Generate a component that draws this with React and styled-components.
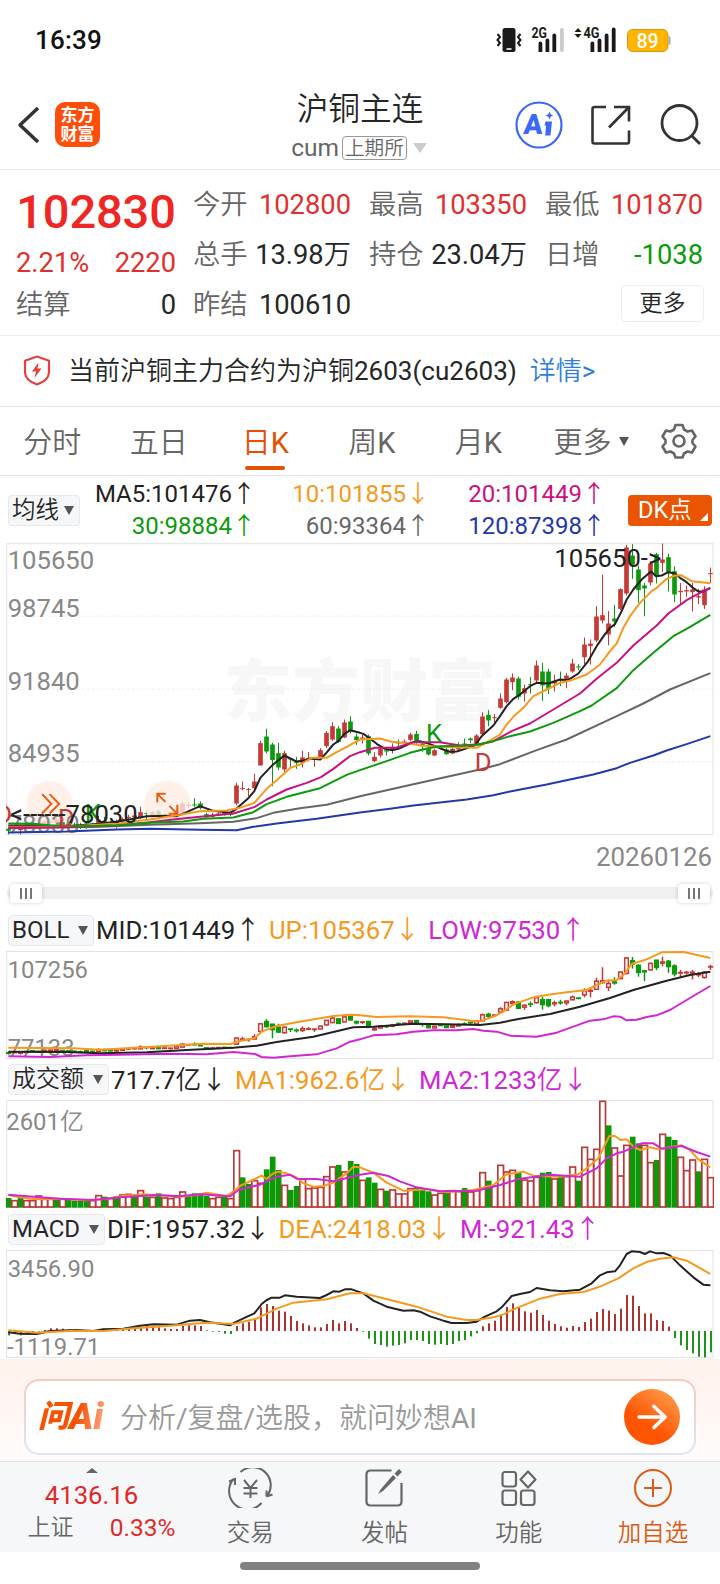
import React from 'react';
import styled, { createGlobalStyle } from 'styled-components';

const RED = '#c53a36';
const GREEN = '#0c9a0c';

/* chart data: three plot units per css pixel, one session every 18 units */
const STEP = 18;
const FIRST = 25.5;
const xAt = (i) => FIRST + i * STEP;

// [rising, body top, body bottom, high, low]
const candles = [
  [0, 868, 874, 864, 885], [1, 862, 868, 858, 872], [1, 866, 872, 860, 885], [1, 858, 866, 854, 870],
  [0, 850, 858, 846, 864], [0, 856, 862, 850, 866], [1, 846, 852, 842, 858], [1, 845, 849, 842, 852],
  [1, 840, 850, 836, 854], [0, 848, 856, 844, 860], [0, 852, 858, 848, 862], [0, 856, 862, 850, 866],
  [0, 860, 865, 850, 868], [0, 852, 862, 846, 868], [0, 856, 862, 850, 866], [1, 840, 856, 830, 862],
  [0, 844, 850, 832, 855], [0, 848, 852, 844, 856], [1, 846, 852, 840, 866], [1, 838, 846, 834, 850],
  [1, 832, 835, 826, 845], [1, 828, 834, 822, 838], [1, 818, 834, 802, 838], [0, 820, 823, 810, 838],
  [1, 818, 832, 814, 834], [0, 814, 831, 810, 838], [1, 826, 830, 822, 834], [1, 828, 830, 822, 840],
  [1, 812, 828, 806, 832], [1, 792, 818, 785, 822], [1, 796, 799, 790, 804], [0, 795, 798, 776, 802],
  [0, 792, 806, 786, 810], [0, 824, 834, 820, 838], [1, 826, 832, 820, 834], [1, 822, 826, 818, 830],
  [0, 820, 824, 816, 828], [0, 822, 826, 816, 830], [1, 738, 792, 730, 798], [1, 746, 749, 726, 752],
  [1, 749, 752, 745, 770], [1, 726, 746, 703, 750], [1, 611, 678, 604, 678], [0, 591, 636, 568, 642],
  [0, 615, 662, 610, 740], [0, 641, 684, 610, 692], [1, 641, 690, 634, 697], [0, 657, 660, 655, 684],
  [0, 668, 671, 652, 688], [1, 654, 670, 634, 684], [1, 656, 660, 638, 665], [1, 658, 661, 652, 682],
  [1, 632, 657, 626, 660], [1, 580, 620, 575, 626], [1, 560, 600, 548, 604], [0, 567, 607, 560, 610],
  [1, 549, 594, 540, 596], [0, 546, 576, 530, 582], [0, 591, 602, 582, 616], [1, 594, 598, 586, 612],
  [0, 590, 642, 585, 648], [1, 652, 665, 638, 668], [1, 628, 648, 622, 654], [0, 632, 636, 626, 648],
  [1, 622, 632, 612, 642], [0, 608, 612, 600, 620], [1, 606, 610, 600, 616], [1, 585, 601, 580, 606],
  [0, 583, 606, 574, 612], [0, 612, 616, 608, 636], [0, 626, 645, 620, 648], [1, 632, 648, 628, 650],
  [0, 622, 626, 618, 630], [0, 630, 644, 626, 646], [1, 628, 642, 624, 644], [1, 618, 630, 608, 632],
  [0, 612, 615, 597, 622], [0, 597, 602, 594, 610], [1, 588, 612, 584, 616], [1, 531, 584, 518, 588],
  [0, 526, 543, 512, 560], [1, 533, 536, 524, 550], [1, 477, 505, 462, 508], [1, 420, 488, 415, 492],
  [1, 414, 428, 402, 452], [0, 417, 472, 412, 480], [1, 446, 462, 435, 486], [0, 434, 437, 412, 462],
  [1, 378, 423, 363, 428], [0, 396, 438, 370, 484], [0, 396, 448, 388, 464], [1, 424, 432, 405, 456],
  [0, 420, 423, 396, 440], [1, 408, 424, 400, 446], [1, 372, 396, 358, 400], [0, 381, 384, 374, 392],
  [1, 315, 353, 294, 375], [1, 312, 320, 300, 375], [1, 231, 303, 200, 308], [1, 227, 243, 106, 252],
  [1, 252, 285, 215, 318], [0, 237, 246, 196, 262], [1, 149, 208, 146, 212], [1, 24, 162, 16, 168],
  [0, 48, 76, 14, 118], [0, 90, 152, 78, 190], [0, 138, 147, 130, 230], [1, 72, 129, 66, 138],
  [0, 44, 108, 40, 132], [1, 60, 70, 12, 98], [0, 53, 100, 42, 156], [0, 95, 165, 80, 188],
  [1, 154, 158, 130, 196], [1, 152, 156, 138, 172], [1, 150, 158, 130, 216], [1, 170, 174, 148, 194],
  [1, 150, 197, 140, 208], [1, 101, 104, 84, 130],
];

const averages = [
  ['#2438a8', '25,879 200,876 350,870 450,868 600,871 710,872 760,862 830,852 950,838 1080,819 1170,808 1240,798 1400,780 1480,767 1530,756 1640,735 1780,705 1850,686 1890,670 1960,648 2000,633 2060,614 2131,590'],
  ['#666666', '25,866 300,862 450,856 600,851 700,847 770,836 820,820 900,806 980,796 1080,770 1240,734 1440,690 1500,674 1610,632 1700,600 1850,530 1930,492 2010,450 2131,401'],
  ['#222222', '25,858 100,858 200,860 300,853 360,845 400,838 440,830 500,829 530,830 555,820 600,800 640,814 691,820 709,808 745,776 763,755 781,715 817,677 853,648 889,666 907,664 930,657 961,660 979,640 1000,615 1015,605 1033,583 1051,572 1080,580 1090,583 1110,597 1130,613 1155,628 1177,632 1200,626 1240,608 1260,605 1290,614 1330,630 1350,637 1370,636 1395,628 1425,617 1445,590 1480,558 1500,530 1520,500 1540,478 1560,465 1590,440 1610,430 1645,432 1680,420 1703,422 1718,413 1735,402 1765,364 1790,320 1815,284 1830,265 1845,254 1865,215 1880,180 1900,150 1925,120 1953,96 1968,110 1985,108 2005,98 2025,102 2040,115 2060,128 2080,146 2095,156 2110,156 2131,145'],
  ['#f7991c', '25,862 200,862 350,852 450,840 540,826 600,815 680,813 720,805 763,790 800,748 835,718 870,686 900,675 935,655 980,655 1010,638 1040,622 1080,600 1140,597 1175,607 1230,612 1260,618 1320,622 1430,625 1470,603 1500,585 1520,555 1540,532 1570,505 1600,470 1640,450 1680,430 1715,422 1760,405 1800,375 1830,335 1850,312 1870,265 1890,230 1920,190 1955,155 1970,145 2000,118 2025,108 2043,107 2075,125 2131,131'],
  ['#c8127f', '25,864 200,863 350,858 450,848 520,840 600,832 700,822 763,803 800,780 860,750 920,730 963,713 1000,688 1050,650 1080,638 1125,625 1190,624 1240,608 1320,608 1380,618 1440,614 1480,605 1535,575 1590,552 1660,510 1740,462 1790,418 1850,370 1900,318 1970,258 2005,222 2060,182 2100,160 2131,146'],
  ['#0c9a0c', '25,852 100,853 150,857 250,860 350,857 450,850 550,846 610,838 700,834 760,818 800,794 860,772 960,746 1040,706 1080,692 1160,665 1230,640 1280,627 1320,620 1420,618 1480,605 1530,590 1590,576 1660,550 1740,515 1775,498 1850,446 1900,392 1960,340 2020,290 2060,268 2131,226'],
];

const bollLines = [
  ['#f7991c', '25,413 220,415 300,419 430,412 560,404 610,401 695,402 709,395 763,385 785,365 830,348 890,337 1000,318 1050,314 1080,316 1130,321 1230,319 1330,322 1420,333 1445,332 1480,320 1510,305 1540,283 1600,262 1640,255 1700,247 1760,240 1790,225 1820,212 1850,210 1870,195 1895,162 1940,148 1985,127 2050,126 2075,131 2131,144'],
  ['#222222', '25,425 200,426 300,430 440,427 560,420 700,413 770,407 830,396 940,380 1060,352 1120,350 1240,341 1340,343 1440,345 1500,338 1560,326 1650,312 1740,290 1830,264 1900,240 2000,212 2070,195 2131,185'],
  ['#cf28d3', '25,439 150,441 260,436 360,434 500,431 620,433 700,426 765,432 785,441 820,443 880,438 950,433 1010,415 1050,395 1080,388 1120,376 1190,373 1240,365 1300,361 1370,361 1420,357 1450,362 1490,365 1530,377 1610,380 1670,368 1770,332 1810,328 1840,319 1860,320 1880,331 1910,329 1940,321 1970,316 2010,300 2080,258 2131,228'],
];

// bar tops, negative for a falling session
const volumes = [
  -354, 362, -354, 362, 362, 348, 358, 358, -356, 358, -360, -362, -362, -362, 362, 347, -350, 356, -348, 345,
  343, -350, 332, -350, 352, -340, 354, 356, 352, 336, -347, -340, -344, -348, 356, 352, -350, 356, 212, -292,
  -312, 302, 310, -268, -230, -270, 316, -330, -318, 298, 326, 324, 322, 290, 261, -255, 276, -243, -252, 301,
  -292, -308, 328, -332, 330, 342, 342, 326, -322, -326, -334, 345, 340, -330, 332, 335, -324, 336, 332, 278,
  -302, 318, 256, 276, 271, -276, 300, 303, 292, -278, -276, 297, -290, 290, 261, -302, 202, 238, 208, 64,
  -136, 204, 288, 196, -170, -190, 196, 248, -240, 163, -170, -180, 232, 272, 240, -274, 238, 293,
];

const volumeLines = [
  ['#f7991c', '25,345 60,352 100,357 180,356 260,361 320,356 370,347 430,343 480,346 540,350 590,345 620,338 680,348 700,335 720,318 785,287 799,297 820,280 835,275 860,280 890,293 910,310 940,320 970,318 1000,308 1040,280 1060,260 1080,262 1120,278 1160,308 1210,332 1280,328 1340,337 1420,330 1480,315 1520,283 1570,275 1600,287 1680,290 1735,283 1760,265 1795,235 1828,168 1845,168 1862,180 1880,178 1900,200 1920,210 1950,202 1975,208 2045,196 2070,210 2095,238 2131,262'],
  ['#cf28d3', '25,344 100,350 180,356 280,360 360,352 470,345 540,349 600,343 690,349 715,330 780,314 830,290 870,284 890,296 950,297 1000,304 1050,292 1080,284 1120,278 1165,288 1200,304 1250,322 1320,334 1430,332 1500,315 1560,296 1650,284 1740,290 1790,265 1820,235 1850,220 1870,215 1905,200 1925,190 1960,190 1985,206 2045,198 2090,216 2131,230'],
];

const MACD_ZERO = 753;
const macdBars = [
  766, 762, 766, 762, 758, 755, 750, 745, 745, 746, 748, 748, 750, 751, 751, 750, 748, 746, 746, 746,
  744, 742, 740, 738, 740, 742, 745, 747, 747, 738, 736, 736, 738, 751, 755, 756, 761, 762, 738, 730,
  725, 715, 682, 672, 678, 692, 695, 708, 723, 730, 736, 742, 742, 732, 720, 730, 723, 730, 744, 755,
  776, 792, 795, 800, 797, 795, 790, 780, 780, 783, 792, 794, 792, 795, 792, 783, 780, 769, 760, 739,
  730, 722, 705, 681, 670, 684, 694, 698, 690, 705, 722, 732, 739, 743, 738, 741, 726, 716, 696, 687,
  692, 702, 686, 645, 647, 678, 700, 700, 720, 723, 740, 774, 796, 810, 820, 830, 832, 817,
];

const macdLines = [
  ['#222222', '25,757 60,761 110,762 150,753 230,750 280,753 310,748 370,746 420,737 460,733 530,734 570,722 600,720 630,727 690,736 705,727 735,713 763,700 785,672 800,660 815,653 840,653 855,646 890,650 960,654 980,645 1000,634 1018,635 1035,628 1055,628 1090,640 1120,662 1160,680 1210,692 1240,691 1260,695 1290,709 1330,722 1355,729 1400,729 1430,725 1455,710 1490,694 1505,682 1535,648 1560,642 1590,636 1610,624 1650,631 1690,634 1740,629 1775,610 1800,586 1820,577 1845,574 1860,556 1880,522 1895,514 1920,516 1935,522 1950,514 1970,520 1990,519 2010,526 2040,556 2080,592 2110,614 2131,616'],
  ['#f7991c', '25,751 110,758 220,752 310,753 400,745 500,738 620,728 700,732 770,716 830,686 880,668 980,658 1050,640 1090,640 1150,655 1250,680 1340,710 1400,720 1430,720 1480,712 1510,703 1540,688 1620,656 1680,642 1750,636 1800,620 1855,595 1900,565 1940,546 1980,536 2020,532 2060,542 2131,582'],
];

const FONTS = "Roboto, 'Noto Sans CJK SC DemiLight', 'Noto Sans CJK SC', sans-serif";
const BOLD_FONTS = "Roboto, 'Noto Sans CJK SC', sans-serif";

const GlobalStyle = createGlobalStyle`
  * {
    box-sizing: border-box;
  }
  body {
    margin: 0;
    background: #fff;
    color: #262626;
    font-family: ${FONTS};
    line-height: 1.2;
  }
`;

const Screen = styled.div`
  display: flex;
  flex-direction: column;
  width: 720px;
  height: 1584px;
  overflow: hidden;
  white-space: nowrap;
`;

const StatusBar = styled.div`
  display: flex;
  justify-content: space-between;
  align-items: center;
  height: 80px;
  padding: 0 48px 0 35px;
`;

const Clock = styled.span`
  padding-top: 2px;
  font-size: 26px;
  font-weight: 500;
  letter-spacing: 0.2px;
  color: #111;
`;

const Header = styled.header`
  display: grid;
  grid-template-columns: 240px 1fr 240px;
  height: 90px;
  border-bottom: 1.5px solid #e8e8e8;
`;

const HeaderSide = styled.div`
  display: flex;
  align-items: center;
  gap: ${(props) => props.$gap}px;
  padding-left: ${(props) => props.$left}px;
`;

const Logo = styled.div`
  width: 45px;
  height: 45px;
  padding-top: 4px;
  border-radius: 10px;
  background: #ff4d0a;
  color: #fff;
  font-family: ${BOLD_FONTS};
  font-size: 17px;
  font-weight: 700;
  line-height: 18.5px;
  text-align: center;
`;

const TitleBlock = styled.div`
  display: flex;
  flex-direction: column;
  align-items: center;
`;

const Title = styled.div`
  margin-top: 7px;
  font-size: 31.7px;
  line-height: 46px;
`;

const Subtitle = styled.div`
  display: flex;
  align-items: center;
  gap: 3px;
  margin-top: -3px;
  padding-right: 2px;
  height: 36px;
  font-size: 24.5px;
  color: #666;
`;

const Exchange = styled.span`
  height: 24px;
  margin-right: 3px;
  padding: 0 2px;
  border: 1px solid #999;
  border-radius: 4px;
  font-size: 19.6px;
  line-height: 23px;
`;

const Triangle = styled.i`
  border: solid transparent;
  border-width: ${(props) => props.$h}px ${(props) => props.$w / 2}px 0;
  border-top-color: ${(props) => props.$color || '#555'};
`;

const Quote = styled.section`
  display: grid;
  grid-template-columns: 160px 1fr;
  column-gap: 17px;
  height: 166px;
  padding: 10px 16px 0;
  border-bottom: 1px solid #ededed;
  font-size: 27.3px;
`;

const PriceColumn = styled.div`
  color: #e0302d;
`;

const Price = styled.div`
  height: 65px;
  font-size: 47px;
  font-weight: 500;
  line-height: 64px;
  letter-spacing: -0.1px;
  color: #ee2624;
  text-align: center;
`;

const Pair = styled.div`
  display: flex;
  justify-content: space-between;
  align-items: center;
  height: ${(props) => props.$h || 50}px;
  padding-top: ${(props) => props.$top || 0}px;
  color: ${(props) => props.$color || '#262626'};
`;

const Label = styled.span`
  color: #666;
`;

const Stats = styled.div`
  display: grid;
  grid-template-columns: repeat(3, 158px);
  grid-auto-rows: 50px;
  column-gap: 18px;
`;

const MoreButton = styled.button`
  grid-column: 3;
  justify-self: end;
  align-self: center;
  width: 83px;
  height: 37px;
  margin: 0 -1px 3px 0;
  padding: 0;
  border: 1.5px solid #ececec;
  border-radius: 5px;
  background: #fff;
  color: #262626;
  font: inherit;
  font-size: 23px;
`;

const Notice = styled.div`
  display: flex;
  align-items: center;
  height: 71px;
  padding: 2px 0 0 23px;
  border-bottom: 1.5px solid #e6e6e6;
  font-size: 26px;

  svg {
    margin: -3px 17px 0 0;
  }
`;

const NoticeLink = styled.a`
  margin-left: 13px;
  color: #2f7fd8;
`;

const Tabs = styled.nav`
  display: grid;
  grid-template-columns: repeat(5, 106.5px) 119px 1fr;
  height: 69px;
  padding-right: 12px;
  border-bottom: 1.5px solid #e6e6e6;
`;

const Tab = styled.div`
  display: flex;
  justify-content: center;
  align-items: center;
  gap: 7px;
  position: relative;
  padding: 4px 2px 0 0;
  font-size: 29px;
  color: ${(props) => (props.$active ? '#e25104' : '#666')};

  svg,
  i {
    margin-top: -4px;
  }

  &::after {
    content: '';
    display: ${(props) => (props.$active ? 'block' : 'none')};
    position: absolute;
    bottom: 5px;
    width: 40px;
    height: 4px;
    border-radius: 2px;
    background: #e25104;
  }
`;

const Legend = styled.div`
  display: flex;
  align-items: center;
  height: 67px;
  padding: 1px 8px 0;
`;

const Picker = styled.div`
  display: flex;
  justify-content: space-between;
  align-items: center;
  width: ${(props) => props.$w}px;
  height: 31px;
  padding: 0 5px 0 3px;
  border: 1px solid #e6e8ec;
  border-radius: 4px;
  background: #f6f7f9;
  font-size: ${(props) => props.$size || 24}px;
`;

const LegendGrid = styled.div`
  display: grid;
  grid-template-columns: 176px 174px 176px;
  grid-auto-rows: 32px;
  align-items: center;
  justify-items: end;
  width: 526px;
  padding-top: 1px;
  font-size: 24px;
`;

const Series = styled.span`
  color: ${(props) => props.$color};
`;

const DkButton = styled.div`
  display: flex;
  align-items: center;
  position: relative;
  width: 84px;
  height: 31px;
  margin-left: auto;
  padding-left: 10px;
  border-radius: 4px;
  background: #ea5504;
  color: #fff;
  font-size: 23.5px;

  &::after {
    content: '';
    position: absolute;
    right: 4px;
    bottom: 5px;
    border: solid transparent;
    border-width: 0 0 8px 8px;
    border-bottom-color: #fff;
  }
`;

const Plot = styled.svg`
  display: block;
  flex: none;
  width: 708px;
  height: ${(props) => props.$h}px;
  margin-left: 6px;
  overflow: hidden;

  text {
    font-family: ${FONTS};
  }
`;

const Watermark = styled.text`
  && {
    font-family: ${BOLD_FONTS};
  }
  font-size: 204px;
  font-weight: 900;
  text-anchor: middle;
  fill: #f7f7f7;
`;

const Dates = styled.div`
  display: flex;
  justify-content: space-between;
  align-items: center;
  height: 44px;
  padding: 0 8px;
  font-size: 25.8px;
  color: #888;
`;

const Range = styled.div`
  display: flex;
  justify-content: space-between;
  align-items: center;
  height: 12px;
  margin: 8px 7px 0;
  padding: 0 3px;
  border-radius: 6px;
  background: #f0f0f2;
`;

const Handle = styled.div`
  display: flex;
  justify-content: center;
  align-items: center;
  gap: 3.5px;
  width: 32px;
  height: 19px;
  border-radius: 4px;
  background: #fff;
  box-shadow: 0 0 4px rgba(0, 0, 0, 0.2);

  i {
    width: 1.5px;
    height: 11px;
    background: #777;
  }
`;

const PanelHead = styled.div`
  display: flex;
  align-items: center;
  gap: 2px;
  height: ${(props) => props.$h}px;
  padding: ${(props) => props.$top || 0}px 8px 0;
  font-size: 25.7px;

  span + span {
    margin-left: 1.7px;
  }
`;

const Values = styled.div`
  padding-top: 1px;
`;

const AskArea = styled.div`
  height: 102px;
  margin-top: 1px;
  padding: 20px 24px 0;
  background: linear-gradient(#fff1ec, #fffcfb);
`;

const AskBox = styled.div`
  display: flex;
  align-items: center;
  height: 76px;
  padding: 0 14px 0 10px;
  border: 2px solid transparent;
  border-radius: 15px;
  background: linear-gradient(#fff, #fff) padding-box, linear-gradient(#f6c8bf, #dfe5f2) border-box;
`;

const AskLogo = styled.div`
  display: flex;
  align-items: center;
  width: 84px;
  height: 44px;
  padding-left: 2px;
  background: linear-gradient(100deg, #f75200 50%, #ffa07a 78%);
  background-clip: text;
  color: transparent;
  font-family: ${BOLD_FONTS};
  font-size: 31px;
  font-weight: 900;
  font-style: italic;
  line-height: 44px;

  b {
    font-size: 37px;
    font-weight: 900;
  }
`;

const Placeholder = styled.div`
  flex: 1;
  padding-top: 4px;
  font-size: 28px;
  color: #999;
`;

const SendButton = styled.div`
  width: 56px;
  height: 56px;
  border-radius: 50%;
  background: linear-gradient(215deg, #ff9a4a 10%, #ff5500 62%);
`;

const BottomBar = styled.nav`
  display: grid;
  grid-template-columns: 183px repeat(4, 134.3px);
  height: 91px;
  border-top: 1px solid #e2e2e4;
  background: #f6f7f9;
`;

const IndexCard = styled.div`
  display: flex;
  flex-direction: column;
  align-items: center;
  padding-top: 6px;
  color: #e02a2a;
  font-size: 25.7px;
`;

const UpMark = styled.i`
  border: solid transparent;
  border-width: 0 6px 5px;
  border-bottom-color: #666;
`;

const IndexValue = styled.div`
  height: 33px;
  line-height: 45px;
`;

const IndexRow = styled.div`
  display: flex;
  justify-content: space-between;
  align-items: center;
  width: 148px;
  height: 34px;
  margin: 5px 0 0 20px;
  font-size: 24.5px;

  ${Label} {
    font-size: 23px;
  }
`;

const NavItem = styled.div`
  display: flex;
  flex-direction: column;
  align-items: center;
  gap: 8px;
  padding-top: 6px;
  color: ${(props) => props.$color || '#666'};
  font-size: 23.5px;
  line-height: 35px;
`;

const HomeIndicator = styled.div`
  width: 240px;
  height: 8px;
  margin: 10px auto 0;
  border-radius: 4px;
  background: #808080;
`;

const Lines = ({ items }) =>
  items.map(([color, points]) => (
    <polyline key={color} points={points} fill="none" stroke={color} strokeWidth="6" strokeLinejoin="round" />
  ));

const Frame = ({ top, bottom }) => (
  <rect x="20" y={top + 1.5} width="2119" height={bottom - top - 3} fill="none" stroke="#e2e2e4" strokeWidth="3" />
);

const KLineChart = () => (
  <Plot $h={292} viewBox="18 10.5 2124 876">
    <Watermark x="1080" y="529">
      东方财富
    </Watermark>
    <Frame top={11} bottom={886} />
    {[230, 449, 667].map((y) => (
      <line key={y} x1="20" x2="2139" y1={y} y2={y} stroke="#ececec" strokeWidth="2.5" strokeDasharray="10 5" />
    ))}
    {candles.map(([up, top, bottom, high, low], i) => (
      <g key={i} fill={up ? RED : GREEN}>
        <rect x={xAt(i) - 1.5} y={high} width="3" height={low - high} />
        <rect x={xAt(i) - 7} y={top} width="14" height={bottom - top} />
      </g>
    ))}
    <circle cx="148" cy="793" r="69" fill="#ffece3" fillOpacity="0.8" />
    <circle cx="502" cy="793" r="69" fill="#ffece3" fillOpacity="0.8" />
    <g fontSize="77" fill="#888">
      <text x="23" y="87">105650</text>
      <text x="23" y="231">98745</text>
      <text x="23" y="450">91840</text>
      <text x="23" y="668">84935</text>
      <text x="23" y="880">78030</text>
    </g>
    <Lines items={averages} />
    <g fontSize="77">
      <text x="-14" y="850" fill={RED}>D</text>
      <text x="174" y="862" fill={RED}>D</text>
      <text x="254" y="848" fill={GREEN}>K</text>
      <text x="1278" y="606" fill={GREEN}>K</text>
      <text x="1424" y="695" fill={RED}>D</text>
      <text x="30" y="850" fill="#222">&lt;------78030</text>
      <text x="1663" y="83" fill="#222">105650-&gt;</text>
    </g>
    <g fill="none" stroke="#ea5a10" strokeWidth="6">
      <path d="M126 764l28 29-28 29M149 764l28 29-28 29" />
      <path d="M472 788v-25h25M472 763l24 24M532 796v27h-26M532 823l-24-24" />
    </g>
  </Plot>
);

// same sessions squeezed into the 77133 - 107256 range
const toBoll = (y) => 140 + (y - 12) * 0.3365;

const BollChart = () => (
  <Plot $h={108} viewBox="18 123 2124 324">
    <Frame top={123} bottom={447} />
    <g fontSize="71.5" fill="#888">
      <text x="23" y="204">107256</text>
      <text x="23" y="439">77133</text>
    </g>
    {candles.map(([up, top, bottom, high, low], i) => (
      <g key={i} fill={up ? '#fff' : GREEN} stroke={up ? RED : GREEN} strokeWidth="4.500">
        <line x1={xAt(i)} x2={xAt(i)} y1={toBoll(high)} y2={toBoll(low)} />
        <rect x={xAt(i) - 5.5} y={toBoll(top)} width="11" height={toBoll(bottom) - toBoll(top)} />
      </g>
    ))}
    <Lines items={bollLines} />
  </Plot>
);

const VolumeChart = () => (
  <Plot $h={108} viewBox="18 60 2124 324">
    <Frame top={60} bottom={384} />
    <text x="19" y="150" fontSize="71.5" fill="#888">
      2601亿
    </text>
    {volumes.map((value, i) =>
      value > 0 ? (
        <rect key={i} x={xAt(i) - 8} y={value} width="17" height={381 - value} fill="#fff" stroke="#b83a38" strokeWidth="5" />
      ) : (
        <rect key={i} x={xAt(i) - 8} y={-value} width="17" height={383 + value} fill="#0b9a05" />
      ),
    )}
    <Lines items={volumeLines} />
  </Plot>
);

const MacdChart = () => (
  <Plot $h={108} viewBox="18 510 2124 324">
    <Frame top={510} bottom={834} />
    <g fontSize="71.5" fill="#888">
      <text x="23" y="590">3456.90</text>
      <text x="21" y="825">-1119.71</text>
    </g>
    {macdBars.map((y, i) => (
      <rect
        key={i}
        x={xAt(i) - 1.5}
        y={Math.min(y, MACD_ZERO)}
        width="6"
        height={Math.abs(y - MACD_ZERO)}
        fill={y < MACD_ZERO ? '#ad3330' : '#1c9418'}
      />
    ))}
    <Lines items={macdLines} />
  </Plot>
);

const StatusIcons = () => (
  <svg width="178" height="32" viewBox="494 24 178 32">
    <g fill="#1a1a1a">
      <rect x="502.500" y="28" width="13" height="24" rx="2.500" />
      <path d="M538.500 43.500a1.900 1.900 0 0 1 3.800 0V52h-3.800zM545.500 40.500a1.900 1.900 0 0 1 3.800 0V52h-3.800zM552.400 35.500a1.900 1.900 0 0 1 3.800 0V52h-3.800z" />
      <path d="M590.500 43.500a1.900 1.900 0 0 1 3.800 0V52h-3.800zM597.600 40.500a1.900 1.900 0 0 1 3.800 0V52h-3.800zM604.700 35.500a1.900 1.900 0 0 1 3.800 0V52h-3.800zM611.800 29.500a1.900 1.900 0 0 1 3.800 0V52h-3.800z" />
      <path d="M574.500 32l3.500-4 3.500 4zM574.500 34l3.500 4 3.500-4z" />
    </g>
    <rect x="560" y="28" width="3.800" height="24" rx="1.500" fill="#ccc" />
    <path d="M506.500 49h5" stroke="#fff" strokeWidth="1.600" />
    <path d="M497.500 34l2.500 3-2.500 3 2.500 3-2.500 3M520.500 34l-2.500 3 2.500 3-2.500 3 2.500 3" fill="none" stroke="#1a1a1a" strokeWidth="2" />
    <g fontFamily="Roboto" fontWeight="700" fill="#1a1a1a" fontSize="14.500">
      <text x="531.500" y="38" textLength="15.500" lengthAdjust="spacingAndGlyphs">2G</text>
      <text x="583.500" y="38" textLength="16" lengthAdjust="spacingAndGlyphs">4G</text>
    </g>
    <rect x="627.500" y="29.500" width="40.500" height="22" rx="5" fill="#ffb400" stroke="#d19c1c" strokeWidth="1" />
    <path d="M669.500 36.500v8" stroke="#aaa" strokeWidth="2" />
    <text x="647.500" y="47.500" textAnchor="middle" fontFamily="Roboto" fontWeight="500" fontSize="19.500" fill="#fff">
      89
    </text>
  </svg>
);

const BackIcon = () => (
  <svg width="24" height="38" viewBox="0 0 24 38" fill="none" stroke="#333" strokeWidth="3.500">
    <path d="M22 2L4 19l18 17" strokeLinejoin="round" />
  </svg>
);

const AiIcon = () => (
  <svg width="48" height="50" viewBox="0 0 48 50">
    <circle cx="24" cy="25" r="22.500" fill="none" stroke="#3b69f5" strokeWidth="2.200" />
    <text x="8.500" y="34.500" fontFamily="Roboto" fontSize="28" fontWeight="900" fill="#3b69f5" transform="skewX(-4) translate(2 0)">
      A
    </text>
    <path d="M30.500 21.500h6.500L35.500 35.500h-5.500l.5-3 .5-7h-1.500zM34.500 11.500q.8 3.500 4 4-3.200.5-4 4-.8-3.500-4-4 3.200-.5 4-4z" fill="#3b69f5" />
  </svg>
);

const ShareIcon = () => (
  <svg width="42" height="42" viewBox="0 0 42 42" fill="none" stroke="#333" strokeWidth="2.600">
    <path d="M16 3H4.500Q2.500 3 2.500 5v32.500q0 2 2 2h32.500q2 0 2-2V26.500M24 3h15v14.500M38.500 3.500L19 23.500" />
  </svg>
);

const SearchIcon = () => (
  <svg width="42" height="42" viewBox="0 0 42 42" fill="none" stroke="#333" strokeWidth="2.800">
    <circle cx="20.500" cy="19" r="17.500" />
    <path d="M32.500 31.500l8.500 8.500" />
  </svg>
);

const ShieldIcon = () => (
  <svg width="28" height="31" viewBox="0 0 28 31">
    <path d="M14 1.500l12 4.300v11.500C26 23 21 27 14 29.500 7 27 2 23 2 17.300V5.800z" fill="none" stroke="#e0423f" strokeWidth="2.200" strokeLinejoin="round" />
    <path d="M15.500 7.500l-6.500 9h4l-1.500 6.500 7-9.500h-4z" fill="#e0423f" />
  </svg>
);

const GearIcon = () => (
  <svg width="36" height="36" viewBox="0 0 36 36" fill="none" stroke="#666" strokeWidth="2.600" strokeLinejoin="round">
    <path d="M14.500 2h7l1.500 4.500 3.500 2 4.500-1 3.500 6-3 3.500v3l3 3.500-3.500 6-4.500-1-3.500 2-1.500 4h-7L13 30.500l-3.500-2-4.500 1-3.500-6 3-3.500v-3l-3-3.500 3.500-6 4.500 1 3.500-2z" />
    <circle cx="18" cy="18" r="5.500" />
  </svg>
);

const TradeIcon = () => (
  <svg width="46" height="40" viewBox="-1 0 46 40" fill="none" stroke="#666" strokeWidth="2">
    <path d="M12.500 4A18 18 0 0 1 39.500 27.500M38.500 28.500v-6M38.500 28.500l6-2M33.500 35A18 18 0 0 1 5.500 11M1 13.500l6-2.500v6M16 12l6.500 8 6.500-8M22.500 19v11M15.500 20h14M15.500 25.500h14" />
  </svg>
);

const PostIcon = () => (
  <svg width="40" height="40" viewBox="0 0 40 40" fill="none" stroke="#666" strokeWidth="2.200">
    <path d="M27.500 2.500H6.500q-4 0-4 4V33.500q0 4 4 4h27q4 0 4-4V15" />
    <path d="M14 26l3-5L29 7l3 3-13 13z" fill="#666" stroke="none" />
    <path d="M32 7l4.500-4.500" strokeWidth="4" />
  </svg>
);

const FeatureIcon = () => (
  <svg width="38" height="40" viewBox="0 0 38 40" fill="none" stroke="#666" strokeWidth="2.200">
    <rect x="2.500" y="4" width="13.500" height="14.500" rx="2.500" />
    <rect x="2.500" y="22.500" width="13.500" height="14.500" rx="2.500" />
    <rect x="21" y="22.500" width="13.500" height="14.500" rx="2.500" />
    <path d="M28 3.500l7.500 8-7.500 8-7.500-8z" strokeLinejoin="round" />
  </svg>
);

const AddIcon = () => (
  <svg width="40" height="40" viewBox="0 0 40 40" fill="none" stroke="#dc5a14" strokeWidth="2">
    <circle cx="20" cy="20" r="18" />
    <path d="M20 11v18M11 20h18" />
  </svg>
);

const Arrow = () => <Triangle $w={10} $h={9} />;

const stats = [
  ['今开', '102800', '#e0302d'],
  ['最高', '103350', '#e0302d'],
  ['最低', '101870', '#e0302d'],
  ['总手', '13.98万'],
  ['持仓', '23.04万'],
  ['日增', '-1038', '#0c9a0c'],
  ['昨结', '100610'],
];

const legend = [
  ['MA5:101476↑', '#222'],
  ['10:101855↓', '#f39a1f'],
  ['20:101449↑', '#c8127f'],
  ['30:98884↑', '#0c9a0c'],
  ['60:93364↑', '#666'],
  ['120:87398↑', '#2438a8'],
];

const Panel = ({ name, width, h, top, values, children }) => (
  <>
    <PanelHead $h={h} $top={top}>
      <Picker $w={width}>
        {name}
        <Arrow />
      </Picker>
      <Values>
        <Series $color="#222">{values[0]}</Series>{' '}
        <Series $color="#f39a1f">{values[1]}</Series>{' '}
        <Series $color="#cf28d3">{values[2]}</Series>
      </Values>
    </PanelHead>
    {children}
  </>
);

const App = () => (
  <Screen>
    <GlobalStyle />
    <StatusBar>
      <Clock>16:39</Clock>
      <StatusIcons />
    </StatusBar>
    <Header>
      <HeaderSide $left={16} $gap={15}>
        <BackIcon />
        <Logo>
          东方
          <br />
          财富
        </Logo>
      </HeaderSide>
      <TitleBlock>
        <Title>沪铜主连</Title>
        <Subtitle>
          cum
          <Exchange>上期所</Exchange>
          <Triangle $w={15} $h={10} $color="#ccc" />
        </Subtitle>
      </TitleBlock>
      <HeaderSide $left={35} $gap={27}>
        <AiIcon />
        <ShareIcon />
        <SearchIcon />
      </HeaderSide>
    </Header>

    <Quote>
      <PriceColumn>
        <Price>102830</Price>
        <Pair $h={35} $top={2} $color="#e0302d">
          <span>2.21%</span>
          <span>2220</span>
        </Pair>
        <Pair>
          <Label>结算</Label>
          <span>0</span>
        </Pair>
      </PriceColumn>
      <Stats>
        {stats.map(([label, value, color]) => (
          <Pair key={label} $color={color}>
            <Label>{label}</Label>
            <span>{value}</span>
          </Pair>
        ))}
        <MoreButton>更多</MoreButton>
      </Stats>
    </Quote>

    <Notice>
      <ShieldIcon />
      当前沪铜主力合约为沪铜2603(cu2603)
      <NoticeLink>详情&gt;</NoticeLink>
    </Notice>

    <Tabs>
      <Tab>分时</Tab>
      <Tab>五日</Tab>
      <Tab $active>日K</Tab>
      <Tab>周K</Tab>
      <Tab>月K</Tab>
      <Tab>
        更多
        <Arrow />
      </Tab>
      <Tab>
        <GearIcon />
      </Tab>
    </Tabs>

    <Legend>
      <Picker $w={72} $size={23.5}>
        均线
        <Arrow />
      </Picker>
      <LegendGrid>
        {legend.map(([text, color]) => (
          <Series key={text} $color={color}>
            {text}
          </Series>
        ))}
      </LegendGrid>
      <DkButton>DK点</DkButton>
    </Legend>

    <KLineChart />
    <Dates>
      <span>20250804</span>
      <span>20260126</span>
    </Dates>
    <Range>
      <Handle>
        <i />
        <i />
        <i />
      </Handle>
      <Handle>
        <i />
        <i />
        <i />
      </Handle>
    </Range>

    <Panel name="BOLL" width={86} h={52} top={10} values={['MID:101449↑', 'UP:105367↓', 'LOW:97530↑']}>
      <BollChart />
    </Panel>
    <Panel name="成交额" width={101} h={41} values={['717.7亿↓', 'MA1:962.6亿↓', 'MA2:1233亿↓']}>
      <VolumeChart />
    </Panel>
    <Panel name="MACD" width={97} h={42} values={['DIF:1957.32↓', 'DEA:2418.03↓', 'M:-921.43↑']}>
      <MacdChart />
    </Panel>

    <AskArea>
      <AskBox>
        <AskLogo>
          问<b>Ai</b>
        </AskLogo>
        <Placeholder>分析/复盘/选股，就问妙想AI</Placeholder>
        <SendButton>
          <svg width="56" height="56" viewBox="0 0 56 56" fill="none" stroke="#fff" strokeWidth="3.600" strokeLinecap="round" strokeLinejoin="round">
            <path d="M15 28h26M30 17.500L41 28 30 38.500" />
          </svg>
        </SendButton>
      </AskBox>
    </AskArea>

    <BottomBar>
      <IndexCard>
        <UpMark />
        <IndexValue>4136.16</IndexValue>
        <IndexRow>
          <Label>上证</Label>
          <span>0.33%</span>
        </IndexRow>
      </IndexCard>
      <NavItem>
        <TradeIcon />
        交易
      </NavItem>
      <NavItem>
        <PostIcon />
        发帖
      </NavItem>
      <NavItem>
        <FeatureIcon />
        功能
      </NavItem>
      <NavItem $color="#dc5a14">
        <AddIcon />
        加自选
      </NavItem>
    </BottomBar>
    <HomeIndicator />
  </Screen>
);

export default App;
